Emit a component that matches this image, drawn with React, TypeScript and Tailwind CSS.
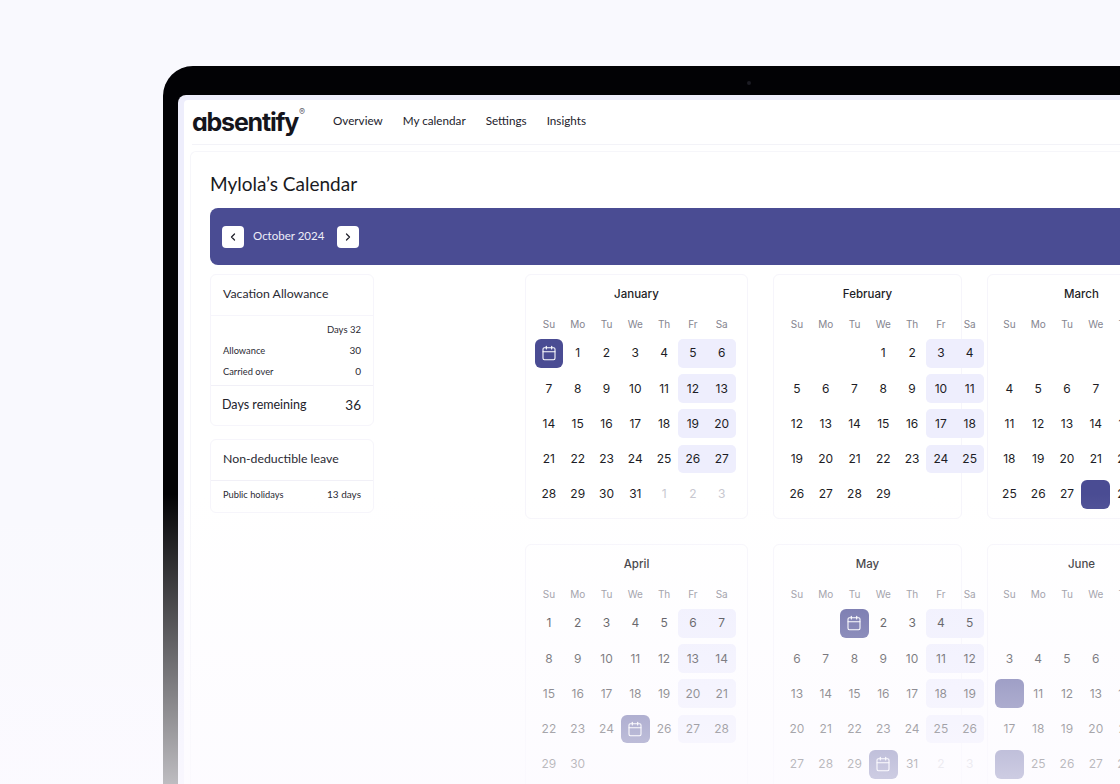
import { Calendar, ChevronLeft, ChevronRight } from 'lucide-react'

const weekdays = ['Su', 'Mo', 'Tu', 'We', 'Th', 'Fr', 'Sa']

type Cell = string

const months: { name: string; width: string; inset: string; rows: Cell[][] }[] = [
  {
    name: 'January',
    width: 'w-[223px]',
    inset: 'ml-[8.5px]',
    rows: [
      ['@', '1', '2', '3', '4', '5', '6'],
      ['7', '8', '9', '10', '11', '12', '13'],
      ['14', '15', '16', '17', '18', '19', '20'],
      ['21', '22', '23', '24', '25', '26', '27'],
      ['28', '29', '30', '31', '~1', '~2', '~3'],
    ],
  },
  {
    name: 'February',
    width: 'w-[189px]',
    inset: 'ml-[8.5px]',
    rows: [
      ['', '', '', '1', '2', '3', '4'],
      ['5', '6', '7', '8', '9', '10', '11'],
      ['12', '13', '14', '15', '16', '17', '18'],
      ['19', '20', '21', '22', '23', '24', '25'],
      ['26', '27', '28', '29', '', '', ''],
    ],
  },
  {
    name: 'March',
    width: 'w-[189px]',
    inset: 'ml-[7px]',
    rows: [
      ['', '', '', '', '', '1', '2'],
      ['4', '5', '6', '7', '8', '9', '10'],
      ['11', '12', '13', '14', '15', '16', '17'],
      ['18', '19', '20', '21', '22', '23', '24'],
      ['25', '26', '27', '#', '29', '30', '31'],
    ],
  },
  {
    name: 'April',
    width: 'w-[223px]',
    inset: 'ml-[8.5px]',
    rows: [
      ['1', '2', '3', '4', '5', '6', '7'],
      ['8', '9', '10', '11', '12', '13', '14'],
      ['15', '16', '17', '18', '19', '20', '21'],
      ['22', '23', '24', '@', '26', '27', '28'],
      ['29', '30', '', '', '', '', ''],
    ],
  },
  {
    name: 'May',
    width: 'w-[189px]',
    inset: 'ml-[8.5px]',
    rows: [
      ['', '', '@', '2', '3', '4', '5'],
      ['6', '7', '8', '9', '10', '11', '12'],
      ['13', '14', '15', '16', '17', '18', '19'],
      ['20', '21', '22', '23', '24', '25', '26'],
      ['27', '28', '29', '@', '31', '~2', '~3'],
    ],
  },
  {
    name: 'June',
    width: 'w-[189px]',
    inset: 'ml-[7px]',
    rows: [
      ['', '', '', '', '', '', '1'],
      ['3', '4', '5', '6', '7', '8', '9'],
      ['#', '11', '12', '13', '14', '15', '16'],
      ['17', '18', '19', '20', '21', '22', '23'],
      ['#', '25', '26', '27', '28', '29', '30'],
    ],
  },
]

function Month({ name, width, inset, rows }: { name: string; width: string; inset: string; rows: Cell[][] }) {
  return (
    <div className={`${width} h-[245px] rounded-md border border-[#f6f5fb] bg-white pt-[10px]`}>
      <div className="text-center text-[11.5px] leading-[19px] font-medium text-[#1d1d26]">{name}</div>
      <div className={`${inset} mt-[12px] grid w-[201.6px] grid-cols-7`}>
        {weekdays.map((d) => (
          <div key={d} className="h-[16px] text-center text-[10px] leading-[16px] text-[#85858f]">
            {d}
          </div>
        ))}
      </div>
      <div className={`${inset} mt-[7px] grid w-[201.6px] grid-cols-7 gap-y-[6.4px]`}>
        {rows.flatMap((row, r) =>
          row.map((cell, c) => {
            const weekend = c >= 5 && r < 4
            if (cell === '@' || cell === '#') {
              return (
                <div key={`${r}-${c}`} className="flex h-[28.8px] items-center justify-center rounded-md bg-[#4a4c93] text-white">
                  {cell === '@' && <Calendar size={16} strokeWidth={1.6} />}
                </div>
              )
            }
            const next = cell.startsWith('~')
            return (
              <div
                key={`${r}-${c}`}
                className={`flex h-[28.8px] items-center justify-center text-[12px] ${weekend ? 'bg-[#eeeefd]' : ''} ${weekend && c === 5 ? 'rounded-l-[5px]' : ''} ${weekend && c === 6 ? 'rounded-r-[5px]' : ''} ${next ? 'text-[#c8c8d0]' : 'text-[#1d1d26]'}`}
              >
                {next ? cell.slice(1) : cell}
              </div>
            )
          }),
        )}
      </div>
    </div>
  )
}

function Row({ label, value }: { label: string; value: string }) {
  return (
    <div className="flex items-center justify-between px-[12px] text-[9.3px] text-[#2a2a33]">
      <span>{label}</span>
      <span className="text-[10px]">{value}</span>
    </div>
  )
}

export default function App() {
  return (
    <div className="relative h-[784px] w-[1120px] overflow-hidden bg-[#f9f9fe] pl-[163px] pt-[66px] font-['Lato',sans-serif]">
      <div className="relative h-[800px] w-[1100px] rounded-tl-[30px] bg-[#020205] pl-[15px] pt-[29px]">
        <div className="absolute left-[584px] top-[15px] h-[4px] w-[4px] rounded-full bg-[#1c1c24]" />
        <div className="h-full rounded-tl-[8px] bg-[#eeeefc] pl-[6px] pt-[5px]">
          <div className="h-full rounded-tl-[4px] bg-white">
            <header className="ml-[8px] flex h-[45px] items-center border-b border-[#f3f3f8]">
              <div className="relative w-[141px] font-['Inter',sans-serif] text-[25px] font-bold leading-none tracking-[-1.2px] text-[#15151c] [font-feature-settings:'cv11']">
                absentify
                <span className="absolute left-[107px] top-[-3px] text-[9px] font-normal tracking-normal text-[#66666f]">®</span>
              </div>
              <nav className="-mt-[3px] flex gap-[20px] text-[11.7px] text-[#22222b]">
                <span>Overview</span>
                <span>My calendar</span>
                <span>Settings</span>
                <span>Insights</span>
              </nav>
            </header>

            <main className="ml-[6px] mt-[6px] h-full rounded-tl-md border-l border-t border-[#f6f6fa] pl-[19px] pt-[20px]">
              <h1 className="text-[19px] leading-[24px] text-[#1a1a22]">Mylola’s Calendar</h1>

              <div className="mt-[12px] flex h-[57px] items-center rounded-l-lg bg-[#4a4c93] pl-[12px]">
                <button className="flex h-[22px] w-[22px] items-center justify-center rounded bg-white text-[#22222b]">
                  <ChevronLeft size={12} strokeWidth={2.5} />
                </button>
                <span className="-mt-[2px] ml-[9px] w-[71px] whitespace-nowrap text-[11.5px] text-[#eeeef8]">October 2024</span>
                <button className="ml-[13px] flex h-[22px] w-[22px] items-center justify-center rounded bg-white text-[#22222b]">
                  <ChevronRight size={12} strokeWidth={2.5} />
                </button>
              </div>

              <div className="mt-[9px] flex gap-[151px]">
                <aside className="flex w-[164px] shrink-0 flex-col gap-[13px]">
                  <div className="h-[152px] rounded-md border border-[#f6f5fb] bg-white">
                    <div className="flex h-[41px] items-center border-b border-[#f6f5fb] px-[12px] pb-[2px] text-[12.3px] text-[#2a2a33]">
                      Vacation Allowance
                    </div>
                    <div className="flex h-[70px] flex-col justify-between border-b border-[#f1f0f7] pb-[6px] pt-[7px]">
                      <div className="pr-[12px] text-right text-[9.5px] text-[#2a2a33]">Days 32</div>
                      <Row label="Allowance" value="30" />
                      <Row label="Carried over" value="0" />
                    </div>
                    <div className="flex h-[39px] items-center justify-between pl-[11px] pr-[12px] text-[12.5px] text-[#22222b]">
                      <span>Days remeining</span>
                      <span className="text-[13.5px]">36</span>
                    </div>
                  </div>
                  <div className="h-[74px] rounded-md border border-[#f6f5fb] bg-white">
                    <div className="flex h-[41px] items-center border-b border-[#f1f0f7] px-[12px] pb-[2px] text-[12.3px] text-[#2a2a33]">
                      Non-deductible leave
                    </div>
                    <div className="pt-[6px]">
                      <Row label="Public holidays" value="13 days" />
                    </div>
                  </div>
                </aside>

                <div className="grid shrink-0 grid-cols-[223px_189px_189px] gap-[25px] font-['Inter',sans-serif]">
                  {months.map((m) => (
                    <Month key={m.name} {...m} />
                  ))}
                </div>
              </div>
            </main>
          </div>
        </div>
      </div>
      {/* bottom fade of the whole mockup */}
      <div className="pointer-events-none absolute inset-x-0 bottom-0 h-[290px] bg-gradient-to-b from-[#fcfaff]/0 to-[#fcfaff]/75" />
    </div>
  )
}
